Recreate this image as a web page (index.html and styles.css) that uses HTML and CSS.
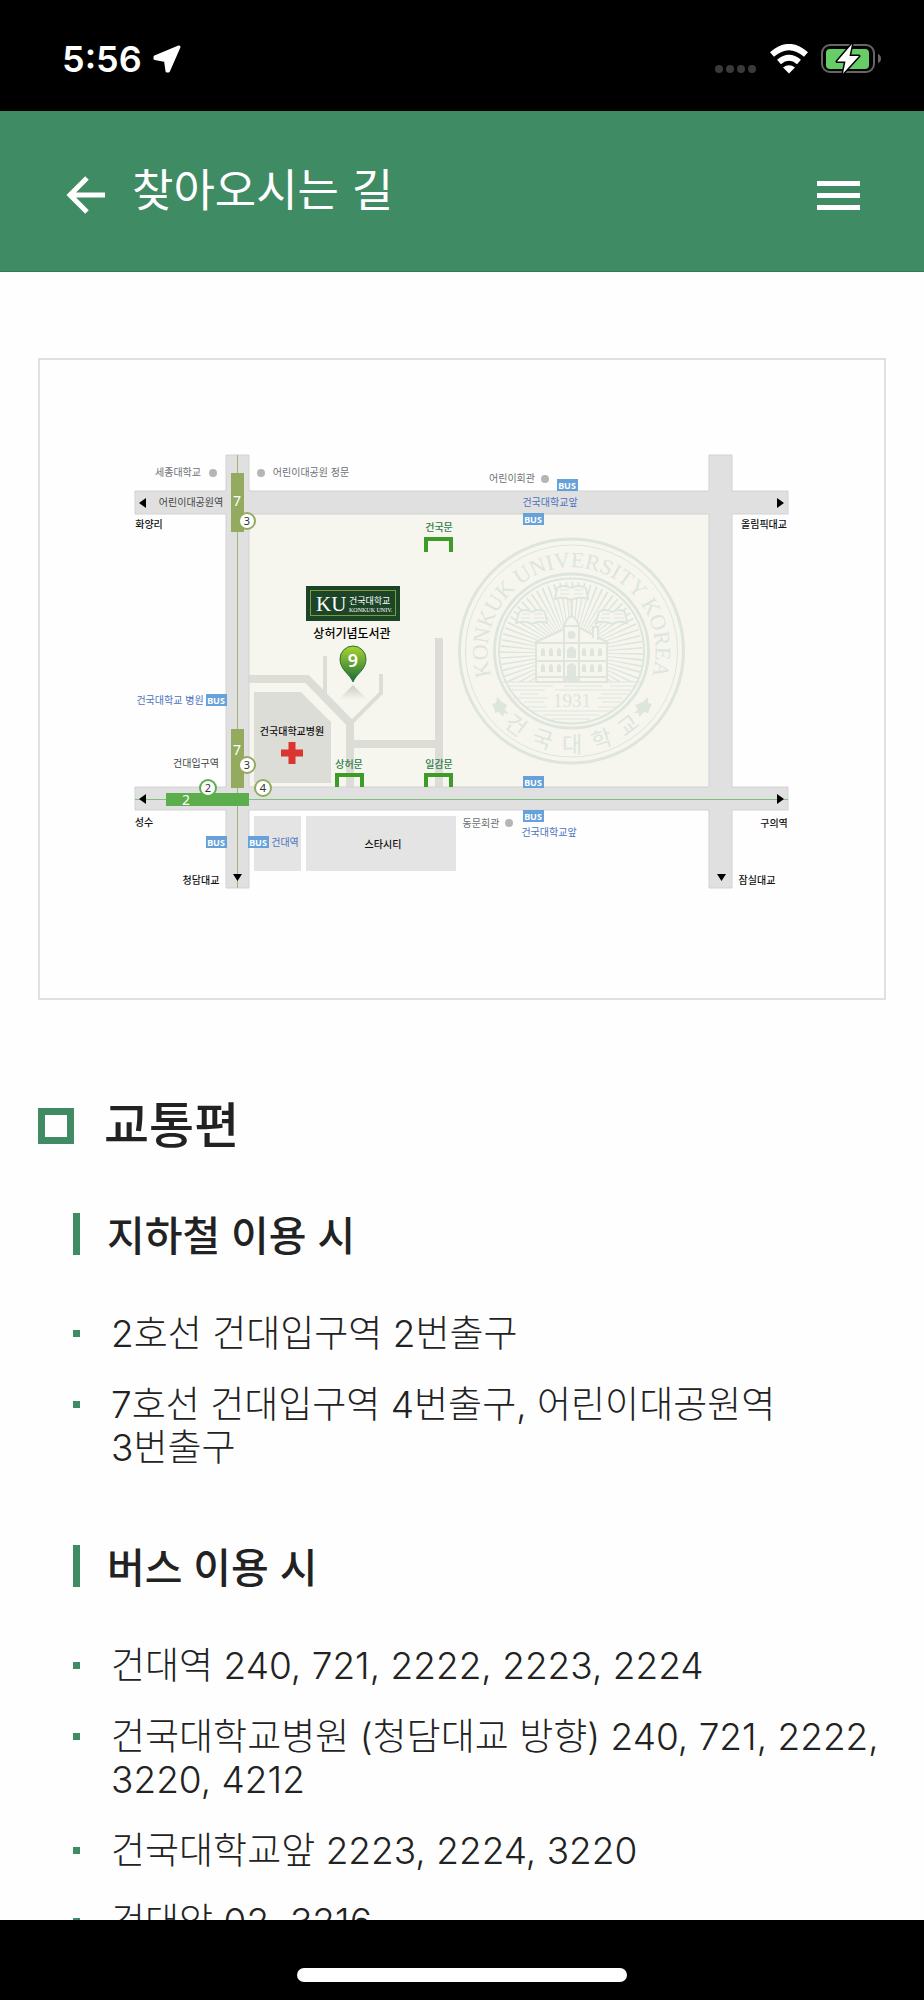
FILE: index.html
```html
<!DOCTYPE html>
<html lang="ko">
<head>
    <meta charset="UTF-8">
    <meta name="viewport" content="width=device-width, initial-scale=1.0">
    <title>찾아오시는 길</title>
    <link rel="stylesheet" href="styles.css">
</head>
<body>
    <div class="screen">
        <div class="status-bar">
            <div class="status-left">
                <span class="time">5:56</span>
                <svg width="30" height="30" viewBox="0 0 30 30">
                    <path d="M27 3L16.500 27H15L13.500 16.500L3 14.500V13Z" fill="#fff" stroke="#fff" stroke-width="3" stroke-linejoin="round"/>
                </svg>
            </div>
            <div class="status-right">
                <svg width="42" height="30" viewBox="0 0 42 30">
                    <g fill="#3a3a3a">
                        <circle cx="4" cy="25" r="4"/><circle cx="15" cy="25" r="4"/>
                        <circle cx="26" cy="25" r="4"/><circle cx="37" cy="25" r="4"/>
                    </g>
                </svg>
                <svg width="40" height="30" viewBox="0 0 40 30">
                    <g fill="none" stroke="#fff" stroke-width="6">
                        <path d="M3 10.500Q20 -4.500 37 10.500"/>
                        <path d="M10 18Q20 9.500 30 18"/>
                    </g>
                    <path d="M14 23.500Q20 19 26 23.500L20 29.500Z" fill="#fff"/>
                </svg>
                <svg width="61" height="32" viewBox="0 0 61 32">
                    <rect x="1" y="2" width="52" height="27" rx="8" fill="none" stroke="#666" stroke-width="2"/>
                    <rect x="5" y="6" width="43" height="20" rx="4" fill="#67ce67"/>
                    <path d="M57 11Q60 12 60 15.500T57 20Z" fill="#666"/>
                    <path d="M31 1L16 18.500H24.500L22 30.500L38 13H28.500Z" fill="#fff" stroke="#000" stroke-width="3" stroke-linejoin="round" paint-order="stroke"/>
                </svg>
            </div>
        </div>

        <header class="header">
            <button class="icon-btn" type="button" aria-label="뒤로">
                <svg width="40" height="40" viewBox="0 0 40 40">
                    <path d="M21 3L4 20L21 37M4 20H39" fill="none" stroke="#fff" stroke-width="5"/>
                </svg>
            </button>
            <h1 class="title">찾아오시는 길</h1>
            <button class="icon-btn menu-btn" type="button" aria-label="메뉴">
                <span></span><span></span><span></span>
            </button>
        </header>

        <main class="content">
            <div class="map-box">
                <svg class="map" viewBox="135 455 653 434" role="img" aria-label="건국대학교 약도">
                    <defs>
                        <linearGradient id="pin" x1="0" y1="0" x2="0" y2="1">
                            <stop offset="0" stop-color="#a8d52f"/>
                            <stop offset="1" stop-color="#1d6b38"/>
                        </linearGradient>
                        <linearGradient id="pinShadow" x1="0" y1="0" x2="0" y2="1">
                            <stop offset="0" stop-color="#aeb0aa"/>
                            <stop offset="1" stop-color="#f6f6ef"/>
                        </linearGradient>
                        <path id="sealTop" d="M495 686A84 84 0 1 1 648 686"/>
                        <path id="sealBottom" d="M471 651A101 101 0 0 0 673 651"/>
                        <clipPath id="sky"><rect x="495" y="575" width="153" height="107"/></clipPath>
                    </defs>

                    <!-- campus -->
                    <rect x="249" y="513" width="460" height="275" fill="#f6f6ef"/>
                    <g fill="none" stroke="#dcddd7" stroke-width="8">
                        <path d="M249 679H307L350 723V788M350 744H438M439 638V788"/>
                        <path d="M325 656V699M351 723L381 693V674" stroke-width="4"/>
                    </g>
                    <path d="M254 692H301L331 722V783H254Z" fill="#dcddd7"/>
                    <path d="M281 753H303M292 742V764" stroke="#dc352f" stroke-width="7"/>

                    <!-- university seal -->
                    <g fill="none" stroke="#dde5dd">
                        <circle cx="571.500" cy="651" r="112" stroke-width="3"/>
                        <circle cx="571.500" cy="651" r="106"/>
                        <circle cx="571.500" cy="651" r="77" stroke-width="3"/>
                        <circle cx="571.500" cy="651" r="72.500" stroke-width="2"/>
                        <circle cx="571.500" cy="653" r="46" stroke-width="50" pathLength="144" stroke-dasharray="0.600 1.400" clip-path="url(#sky)"/>
                        <path d="M501 682H643M507 686H553M564 686H603M610 686H636M512 690H545M555 690H631M520 694H538M601 694H628M514 698H548M598 698H622M524 702H544M602 702H620M526 707H547M598 707H618M532 711H612M543 715H599M551 719H590"/>
                    </g>
                    <g stroke="#dde5dd" fill="#f6f6ef">
                        <path d="M536 642L564 629H582L607 642V682H536Z" stroke-width="2"/>
                        <path d="M593 638V627H598V640M564 682V625Q571.500 608 579 625V682Z" stroke-width="2"/>
                        <path d="M571.500 600V616M564 626H579M534 643H609M536 661H607M536 677H607" stroke-width="2"/>
                        <path d="M557 588Q564 584 571 588Q579 584 586 588L588 599Q579 596 571 600Q563 596 555 599Z" stroke-width="2"/>
                        <path d="M519 612Q525 608 532 612Q539 608 545 612L547 623Q539 620 532 624Q524 620 516 623Z" stroke-width="2"/>
                        <path d="M599 612Q605 608 612 612Q619 608 625 612L627 623Q619 620 612 624Q604 620 596 623Z" stroke-width="2"/>
                        <path d="M560 590H569M574 590H583M560 594H569M574 594H583M522 614H530M534 614H543M521 618H530M534 618H544M602 614H610M614 614H623M601 618H610M614 618H624"/>
                    </g>
                    <g fill="#dde5dd">
                        <circle cx="571.500" cy="635" r="4"/>
                        <path d="M541 656V650Q543 646 545 650V656ZM549 656V650Q551 646 553 650V656ZM557 656V650Q559 646 561 650V656ZM582 656V650Q584 646 586 650V656ZM590 656V650Q592 646 594 650V656ZM598 656V650Q600 646 602 650V656Z"/>
                        <path d="M541 672V666Q543 662 545 666V672ZM549 672V666Q551 662 553 666V672ZM557 672V666Q559 662 561 666V672ZM582 672V666Q584 662 586 666V672ZM590 672V666Q592 662 594 666V672ZM598 672V666Q600 662 602 666V672Z"/>
                        <path d="M567 658V650Q571.500 643 576 650V658ZM567 676V666Q571.500 660 576 666V676ZM562 682L567 677H576L581 682Z"/>
                        <path d="M497 697L502 702L507 705L505 710L509 714L504 713L503 717L499 712L495 713L494 708L492 704L496 703Z"/>
                        <path d="M648 697L643 702L635 705L638 710L634 713L639 713L639 717L644 712L648 713L650 708L652 704L648 703Z"/>
                    </g>
                    <g class="seal-text">
                        <text><textPath href="#sealTop" startOffset="50%" text-anchor="middle">KONKUK UNIVERSITY KOREA</textPath></text>
                        <text class="seal-ko"><textPath href="#sealBottom" startOffset="50%" text-anchor="middle">건&nbsp; 국&nbsp; 대&nbsp; 학&nbsp; 교</textPath></text>
                        <text class="seal-year" x="572" y="707" text-anchor="middle">1931</text>
                    </g>

                    <!-- roads -->
                    <path d="M135 491H226V455H249V491H709V455H732V491H788V514H732V787H788V810H732V888H709V810H249V888H226V810H135V787H226V514H135ZM249 514V787H709V514Z" fill="#e0e0e0" fill-rule="evenodd" stroke="#d2d2d2"/>
                    <path d="M237.500 455V888" stroke="#a3b377"/>
                    <path d="M135 799.500H788" stroke="#7fc07c"/>
                    <rect x="254" y="816" width="47" height="55" fill="#e4e4e4"/>
                    <rect x="306" y="816" width="150" height="55" fill="#e4e4e4"/>

                    <!-- subway stations -->
                    <rect x="231" y="473" width="13" height="59" fill="#94ab5f"/>
                    <rect x="231" y="729" width="13" height="59" fill="#94ab5f"/>
                    <rect x="166" y="793" width="83" height="13" fill="#5cad4c"/>
                    <g fill="#fff" stroke="#94ab5f" stroke-width="2">
                        <circle cx="247" cy="521" r="8"/>
                        <circle cx="247" cy="765" r="8"/>
                        <circle cx="263" cy="788" r="8"/>
                        <circle cx="208" cy="788" r="8" stroke="#5cad4c"/>
                    </g>
                    <g class="line-no">
                        <text x="237" y="506">7</text>
                        <text x="237" y="755">7</text>
                        <text x="186" y="805">2</text>
                    </g>
                    <g class="exit-no">
                        <text x="247" y="525">3</text>
                        <text x="247" y="769">3</text>
                        <text x="263" y="792">4</text>
                        <text x="208" y="792">2</text>
                    </g>

                    <!-- direction arrows -->
                    <path d="M139 503L146 498V508ZM139 799L146 794V804ZM784 503L777 498V508ZM784 799L777 794V804ZM233 874H242L237.500 881ZM717 874H726L721.500 881Z"/>

                    <!-- gates -->
                    <path d="M426 552V539H451V552M426 787V775H451V787M337 787V775H362V787" fill="none" stroke="#3d9b28" stroke-width="4"/>
                    <g class="label gate">
                        <text x="439" y="531">건국문</text>
                        <text x="439" y="768">일감문</text>
                        <text x="349" y="768">상허문</text>
                    </g>

                    <!-- landmarks -->
                    <g fill="#b5b5b5">
                        <circle cx="213" cy="473" r="4"/>
                        <circle cx="261" cy="473" r="4"/>
                        <circle cx="545" cy="479" r="4"/>
                        <circle cx="509" cy="823" r="4"/>
                    </g>
                    <g class="label place">
                        <text x="178" y="476">세종대학교</text>
                        <text x="311" y="476">어린이대공원 정문</text>
                        <text x="512" y="482">어린이회관</text>
                        <text x="481" y="827">동문회관</text>
                    </g>
                    <g class="label station">
                        <text x="191" y="506">어린이대공원역</text>
                        <text x="196" y="767">건대입구역</text>
                    </g>
                    <g class="label area">
                        <text x="149" y="528">화양리</text>
                        <text x="764" y="528">올림픽대교</text>
                        <text x="144" y="826">성수</text>
                        <text x="774" y="827">구의역</text>
                        <text x="201" y="884">청담대교</text>
                        <text x="757" y="884">잠실대교</text>
                        <text x="383" y="848">스타시티</text>
                        <text x="292" y="735">건국대학교병원</text>
                    </g>

                    <!-- bus stops -->
                    <g fill="#66a1d9">
                        <rect x="557" y="479" width="21" height="12"/>
                        <rect x="523" y="513" width="21" height="12"/>
                        <rect x="523" y="776" width="21" height="12"/>
                        <rect x="523" y="810" width="21" height="12"/>
                        <rect x="206" y="694" width="21" height="12"/>
                        <rect x="206" y="836" width="21" height="12"/>
                        <rect x="248" y="836" width="21" height="12"/>
                    </g>
                    <g class="bus">
                        <text x="567" y="489">BUS</text>
                        <text x="533" y="523">BUS</text>
                        <text x="533" y="786">BUS</text>
                        <text x="533" y="820">BUS</text>
                        <text x="216" y="704">BUS</text>
                        <text x="216" y="846">BUS</text>
                        <text x="258" y="846">BUS</text>
                    </g>
                    <g class="label stop">
                        <text x="550" y="506">건국대학교앞</text>
                        <text x="549" y="836">건국대학교앞</text>
                        <text x="170" y="704">건국대학교 병원</text>
                        <text x="285" y="846">건대역</text>
                    </g>

                    <!-- library -->
                    <rect x="306" y="586" width="94" height="35" fill="#1c4427"/>
                    <rect x="310.500" y="590.500" width="85" height="25" fill="none" stroke="#7f9c3c"/>
                    <text class="ku" x="316" y="611">KU</text>
                    <text class="ku-ko" x="349" y="604">건국대학교</text>
                    <text class="ku-en" x="349" y="612">KONKUK UNIV.</text>
                    <text class="library" x="352" y="638">상허기념도서관</text>
                    <path d="M353 685L368 700H338Z" fill="url(#pinShadow)" opacity="0.600"/>
                    <path d="M353 682C350 674 340 670 340 659A13 13 0 0 1 366 659C366 670 356 674 353 682Z" fill="url(#pin)" stroke="#2b7238"/>
                    <text class="pin-no" x="353" y="667">9</text>
                </svg>
            </div>

            <section class="transport">
                <h2>교통편</h2>

                <h3>지하철 이용 시</h3>
                <ul>
                    <li>2호선 건대입구역 2번출구</li>
                    <li>7호선 건대입구역 4번출구, 어린이대공원역 3번출구</li>
                </ul>

                <h3>버스 이용 시</h3>
                <ul>
                    <li>건대역 240, 721, 2222, 2223, 2224</li>
                    <li>건국대학교병원 (청담대교 방향) 240, 721, 2222, 3220, 4212</li>
                    <li>건국대학교앞 2223, 2224, 3220</li>
                    <li>건대앞 02, 3216</li>
                </ul>
            </section>
        </main>

        <div class="home-bar"><span class="home-indicator"></span></div>
    </div>
</body>
</html>
```

FILE: styles.css
```css
*, *::before {
    box-sizing: border-box;
}
body {
    margin: 0;
    background: #fefefe;
    color: #222;
    font-family: Inter, "Noto Sans CJK KR", sans-serif;
}
h1, h2, h3, ul {
    margin: 0;
    padding: 0;
}
.screen {
    display: flex;
    flex-direction: column;
    height: 100vh;
    overflow: hidden;
}

/* status bar */
.status-bar {
    display: flex;
    flex: none;
    justify-content: space-between;
    align-items: center;
    height: 111px;
    padding: 6px 42px 0 62px;
    background: #000;
    color: #fff;
}
.status-left {
    display: flex;
    align-items: center;
    gap: 10px;
}
.status-right {
    display: flex;
    align-items: center;
    gap: 12px;
}
.time {
    font-size: 36px;
    font-weight: 600;
    line-height: 44px;
}

/* header */
.header {
    display: flex;
    flex: none;
    align-items: center;
    height: 161px;
    padding: 8px 64px 0 66px;
    background: #3f8b64;
    border-bottom: 1px solid #2a8055;
    color: #fff;
}
.icon-btn {
    display: flex;
    padding: 0;
    border: none;
    background: none;
    cursor: pointer;
}
.title {
    flex: 1;
    padding: 0 0 8px 26px;
    font-size: 45px;
    font-weight: 400;
    line-height: 60px;
}
.menu-btn {
    flex-direction: column;
    gap: 7px;
    width: 43px;
}
.menu-btn span {
    height: 5px;
    background: #fff;
}

/* content */
.content {
    flex: 1;
    min-height: 0;
    overflow: hidden;
    padding: 86px 38px 0;
}
.map-box {
    padding: 95px 96px 109px 95px;
    border: 2px solid #e0e0e0;
}
.map {
    display: block;
    width: 100%;
    overflow: visible;
}
.transport {
    padding-top: 96px;
}
.transport h2 {
    display: flex;
    align-items: center;
    gap: 30px;
    font-size: 49px;
    font-weight: 500;
    line-height: 60px;
}
.transport h2::before {
    content: "";
    width: 36px;
    height: 36px;
    border: 7px solid #3f8b64;
}
.transport h3 {
    margin: 57px 0 57px 35px;
    padding: 4px 0 0 27px;
    border-left: 7px solid #3f8b64;
    font-size: 41px;
    font-weight: 500;
    line-height: 38px;
}
.transport ul {
    display: flex;
    flex-direction: column;
    gap: 28px;
    margin-left: 35px;
    list-style: none;
}
.transport ul + h3 {
    margin-top: 76px;
}
.transport li {
    position: relative;
    padding-left: 38px;
    font-size: 37px;
    font-weight: 300;
    line-height: 43px;
    word-break: keep-all;
}
.transport li::before {
    content: "";
    position: absolute;
    top: 18px;
    left: 0;
    width: 7px;
    height: 7px;
    background: #3f8b64;
}

/* map texts */
.label {
    font-family: "Noto Sans CJK KR", sans-serif;
    font-size: 10px;
    text-anchor: middle;
}
.place {
    fill: #6b7075;
}
.station {
    fill: #444;
}
.area {
    fill: #111;
    font-weight: 500;
}
.stop {
    fill: #4a72bd;
}
.gate {
    fill: #2c7a4b;
    font-weight: 500;
}
.bus {
    fill: #fff;
    font-family: "Noto Sans", sans-serif;
    font-size: 9px;
    font-weight: 700;
    text-anchor: middle;
}
.line-no {
    fill: #fff;
    font-family: "Noto Sans", sans-serif;
    font-size: 14px;
    text-anchor: middle;
}
.exit-no {
    fill: #333;
    font-family: "Noto Sans", sans-serif;
    font-size: 11px;
    text-anchor: middle;
}
.library {
    font-family: "Noto Sans CJK KR", sans-serif;
    font-size: 12px;
    font-weight: 500;
    text-anchor: middle;
}
.ku {
    fill: #fff;
    font-family: "Liberation Serif", serif;
    font-size: 21px;
}
.ku-ko {
    fill: #fff;
    font-family: "Noto Sans CJK KR", sans-serif;
    font-size: 9px;
}
.ku-en {
    fill: #fff;
    font-family: "Liberation Serif", serif;
    font-size: 6px;
}
.pin-no {
    fill: #fff;
    font-family: "Noto Sans", sans-serif;
    font-size: 18px;
    font-weight: 600;
    text-anchor: middle;
}
.seal-text {
    fill: #dde5dd;
    font-family: "Liberation Serif", serif;
    font-size: 22px;
}
.seal-ko {
    font-family: "Noto Sans CJK KR", sans-serif;
    font-size: 22px;
}
.seal-year {
    font-size: 19px;
}

/* home indicator */
.home-bar {
    display: flex;
    flex: none;
    justify-content: center;
    height: 80px;
    padding-top: 48px;
    background: #000;
}
.home-indicator {
    width: 330px;
    height: 14px;
    border-radius: 7px;
    background: #fff;
}
```
